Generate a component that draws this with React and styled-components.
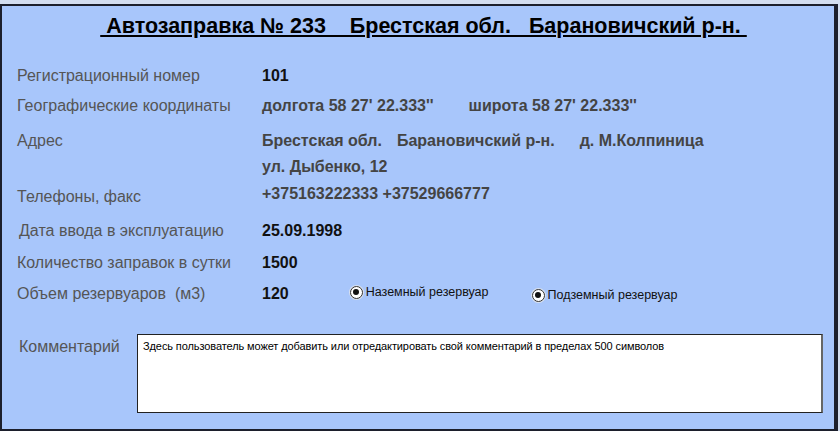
import styled, { createGlobalStyle } from "styled-components";

const Global = createGlobalStyle`
  html, body {
    margin: 0;
    padding: 0;
    background: #d3ddef;
    font-family: "Liberation Sans", Arial, sans-serif;
  }
`;

const Page = styled.div`
  width: 840px;
  height: 431px;
  padding-top: 4px;
  box-sizing: border-box;
`;

const Card = styled.div`
  width: 838px;
  height: 427px;
  box-sizing: border-box;
  background: #a8c6fb;
  border: 2px solid #1c1f2c;
  border-right-width: 4px;
  padding: 0 0 0 15px;
`;

const Title = styled.h1`
  margin: 8px 0 0 0;
  padding-right: 4px;
  text-align: center;
  font-size: 21.5px;
  line-height: 24px;
  font-weight: bold;
  color: #000;
  text-decoration: underline;
  white-space: pre;
`;

const Row = styled.div`
  display: flex;
  align-items: flex-start;
  margin-top: ${(p) => p.$top}px;
  line-height: 20px;
`;

const Label = styled.div`
  width: 245px;
  flex: none;
  font-size: 16px;
  color: #555;
  white-space: pre;
  padding-left: ${(p) => p.$indent || 0}px;
  margin-top: ${(p) => p.$shift || 0}px;
  box-sizing: border-box;
`;

const Value = styled.div`
  display: flex;
  gap: ${(p) => p.$gap || 0}px;
  font-size: 16px;
  font-weight: bold;
  color: ${(p) => (p.$dark ? "#111" : "#444")};
  white-space: pre;
  margin-top: ${(p) => p.$shift || 0}px;
`;

const Lines = styled.div`
  display: flex;
  flex-direction: column;
  gap: 6px;
`;

const Radio = styled.label`
  display: flex;
  align-items: center;
  gap: 3px;
  font-size: 12.5px;
  color: #111;
  margin-left: ${(p) => p.$left}px;
  margin-top: ${(p) => p.$shift || 0}px;
`;

const Dot = styled.span`
  width: 11px;
  height: 11px;
  border-radius: 50%;
  border: 1px solid #333;
  background: #fff;
  display: inline-flex;
  align-items: center;
  justify-content: center;
  box-shadow: 0 0 0 1px #d8e0ee;
  &::after {
    content: "";
    width: 6px;
    height: 6px;
    border-radius: 50%;
    background: #111;
  }
`;

const CommentRow = styled.div`
  display: flex;
  align-items: flex-start;
  margin-top: 29px;
`;

const CommentLabel = styled.div`
  width: 118px;
  flex: none;
  padding-left: 2px;
  padding-top: 4px;
  font-size: 16px;
  color: #555;
`;

const Comment = styled.div`
  width: 686px;
  height: 79px;
  box-sizing: border-box;
  background: #fff;
  border: 1px solid #222;
  border-right: 2px solid #666;
  padding: 4px 5px;
  font-size: 11px;
  line-height: 14px;
  letter-spacing: -0.1px;
  color: #000;
`;

export default function App() {
  return (
    <Page>
      <Global />
      <Card>
        <Title>{" Автозаправка № 233    Брестская обл.   Барановичский р-н. "}</Title>
        <Row $top={28}>
          <Label>Регистрационный номер</Label>
          <Value $dark>101</Value>
        </Row>
        <Row $top={10}>
          <Label>Географические координаты</Label>
          <Value $gap={35}>
            <span>{"долгота 58 27' 22.333''"}</span>
            <span>{"широта 58 27' 22.333''"}</span>
          </Value>
        </Row>
        <Row $top={15}>
          <Label>Адрес</Label>
          <Lines>
            <Value $gap={15}>
              <span>Брестская обл.</span>
              <Value as="span" $gap={25}>
                <span>Барановичский р-н.</span>
                <span>д. М.Колпиница</span>
              </Value>
            </Value>
            <Value>ул. Дыбенко, 12</Value>
          </Lines>
        </Row>
        <Row $top={8}>
          <Label $shift={2}>Телефоны, факс</Label>
          <Value $shift={-1}>+375163222333 +37529666777</Value>
        </Row>
        <Row $top={14}>
          <Label $indent={2}>Дата ввода в эксплуатацию</Label>
          <Value $dark>25.09.1998</Value>
        </Row>
        <Row $top={12}>
          <Label>Количество заправок в сутки</Label>
          <Value $dark>1500</Value>
        </Row>
        <Row $top={11}>
          <Label>Объем резервуаров  (м3)</Label>
          <Value $dark>120</Value>
          <Radio $left={61} $shift={-2}>
            <Dot />
            Наземный резервуар
          </Radio>
          <Radio $left={43} $shift={1}>
            <Dot />
            Подземный резервуар
          </Radio>
        </Row>
        <CommentRow>
          <CommentLabel>Комментарий</CommentLabel>
          <Comment>
            Здесь пользователь может добавить или отредактировать свой комментарий в пределах 500 символов
          </Comment>
        </CommentRow>
      </Card>
    </Page>
  );
}
